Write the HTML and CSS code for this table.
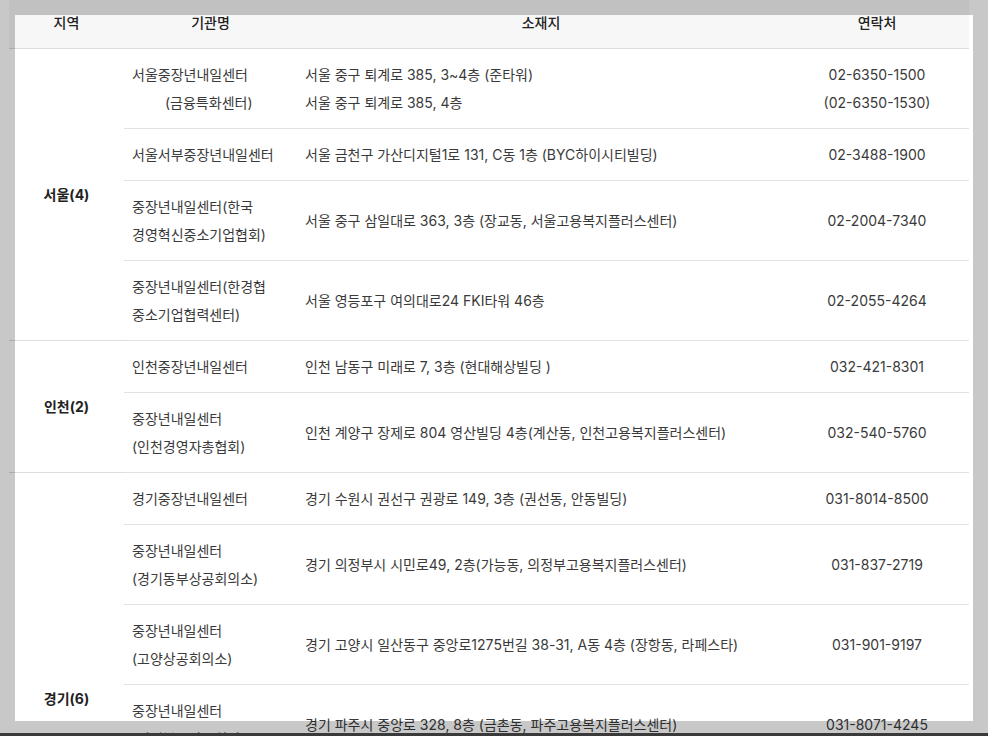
FILE: index.html
```html
<!DOCTYPE html>
<html lang="ko">
<head>
    <meta charset="UTF-8">
    <meta name="viewport" content="width=device-width, initial-scale=1.0">
    <title>중장년내일센터 현황</title>
    <link rel="stylesheet" href="styles.css">
</head>
<body>
    <table class="center-table">
        <colgroup>
            <col class="col-region">
            <col class="col-name">
            <col class="col-addr">
            <col class="col-tel">
        </colgroup>
        <thead>
            <tr>
                <th>지역</th>
                <th>기관명</th>
                <th>소재지</th>
                <th>연락처</th>
            </tr>
        </thead>
        <tbody>
            <tr class="group-start">
                <td class="region" rowspan="4">서울(4)</td>
                <td class="name">서울중장년내일센터<br><span class="indent">(금융특화센터)</span></td>
                <td class="addr">서울 중구 퇴계로 385, 3~4층 (준타워)<br>서울 중구 퇴계로 385, 4층</td>
                <td class="tel">02-6350-1500<br>(02-6350-1530)</td>
            </tr>
            <tr>
                <td class="name">서울서부중장년내일센터</td>
                <td class="addr">서울 금천구 가산디지털1로 131, C동 1층 (BYC하이시티빌딩)</td>
                <td class="tel">02-3488-1900</td>
            </tr>
            <tr>
                <td class="name">중장년내일센터(한국<br>경영혁신중소기업협회)</td>
                <td class="addr">서울 중구 삼일대로 363, 3층 (장교동, 서울고용복지플러스센터)</td>
                <td class="tel">02-2004-7340</td>
            </tr>
            <tr>
                <td class="name">중장년내일센터(한경협<br>중소기업협력센터)</td>
                <td class="addr">서울 영등포구 여의대로24 FKI타워 46층</td>
                <td class="tel">02-2055-4264</td>
            </tr>

            <tr class="group-start">
                <td class="region" rowspan="2">인천(2)</td>
                <td class="name">인천중장년내일센터</td>
                <td class="addr">인천 남동구 미래로 7, 3층 (현대해상빌딩 )</td>
                <td class="tel">032-421-8301</td>
            </tr>
            <tr>
                <td class="name">중장년내일센터<br>(인천경영자총협회)</td>
                <td class="addr">인천 계양구 장제로 804 영산빌딩 4층(계산동, 인천고용복지플러스센터)</td>
                <td class="tel">032-540-5760</td>
            </tr>

            <tr class="group-start">
                <td class="region" rowspan="6">경기(6)</td>
                <td class="name">경기중장년내일센터</td>
                <td class="addr">경기 수원시 권선구 권광로 149, 3층 (권선동, 안동빌딩)</td>
                <td class="tel">031-8014-8500</td>
            </tr>
            <tr>
                <td class="name">중장년내일센터<br>(경기동부상공회의소)</td>
                <td class="addr">경기 의정부시 시민로49, 2층(가능동, 의정부고용복지플러스센터)</td>
                <td class="tel">031-837-2719</td>
            </tr>
            <tr>
                <td class="name">중장년내일센터<br>(고양상공회의소)</td>
                <td class="addr">경기 고양시 일산동구 중앙로1275번길 38-31, A동 4층 (장항동, 라페스타)</td>
                <td class="tel">031-901-9197</td>
            </tr>
            <tr>
                <td class="name">중장년내일센터<br>(경기북부상공회의소)</td>
                <td class="addr">경기 파주시 중앙로 328, 8층 (금촌동, 파주고용복지플러스센터)</td>
                <td class="tel">031-8071-4245</td>
            </tr>
            <tr>
                <td class="name">중장년내일센터<br>(경기경영자총협회)</td>
                <td class="addr">경기 성남시 분당구 성남대로 925번길 16, 4층</td>
                <td class="tel">031-701-5711</td>
            </tr>
            <tr>
                <td class="name">중장년내일센터<br>(안산상공회의소)</td>
                <td class="addr">경기 안산시 단원구 광덕대로 194, 6층</td>
                <td class="tel">031-481-5252</td>
            </tr>
        </tbody>
    </table>

    <!-- capture frame over the page -->
    <div class="frame"></div>
    <div class="frame-bar"></div>
</body>
</html>
```

FILE: styles.css
```css
body {
    margin: 0;
    background-color: #ffffff;
    font-family: Inter, "Noto Sans CJK KR", sans-serif;
    font-size: 14px;
    color: #3a3a3a;
}
.center-table {
    margin-left: 9px;
    width: 960px;
    border-collapse: collapse;
    table-layout: fixed;
}
.col-region {
    width: 115px;
}
.col-name {
    width: 173px;
}
.col-addr {
    width: 488px;
}
.col-tel {
    width: 184px;
}
.center-table th {
    background-color: #f7f7f7;
    color: #222222;
    font-weight: 500;
    line-height: 27px;
    padding: 9px 8px 12px;
    text-align: center;
    border-bottom: 1px solid #dddddd;
}
.center-table td {
    line-height: 28px;
    padding: 12px 8px 11px;
    border-bottom: 1px solid #e2e2e2;
    vertical-align: middle;
    text-align: left;
}
.center-table td.region {
    text-align: center;
    font-weight: 700;
    color: #222222;
    border-bottom: 1px solid #dddddd;
}
.center-table td.tel {
    text-align: center;
}
.indent {
    padding-left: 33px;
}
.frame {
    position: fixed;
    top: 0;
    left: 0;
    width: 988px;
    height: 733px;
    box-sizing: border-box;
    border-style: solid;
    border-color: rgba(0, 0, 0, 0.215);
    border-width: 15px 15px 12px 15px;
    pointer-events: none;
}
.frame-bar {
    position: fixed;
    left: 0;
    bottom: 0;
    width: 988px;
    height: 3px;
    background-color: #3a3a3a;
}
```
